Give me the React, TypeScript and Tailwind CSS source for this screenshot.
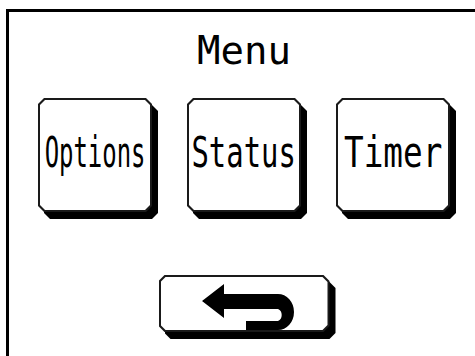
import React from "react";

const outerClip =
  "[clip-path:polygon(6px_0,calc(100%_-_6px)_0,100%_6px,100%_calc(100%_-_6px),calc(100%_-_6px)_100%,6px_100%,0_calc(100%_-_6px),0_6px)]";
const innerClip =
  "[clip-path:polygon(5px_0,calc(100%_-_5px)_0,100%_5px,100%_calc(100%_-_5px),calc(100%_-_5px)_100%,5px_100%,0_calc(100%_-_5px),0_5px)]";

const BevelButton = ({
  className,
  children,
}: {
  className: string;
  children: React.ReactNode;
}) => (
  <div className={`relative ${className}`}>
    {/* drop shadow */}
    <div
      className={`absolute inset-0 translate-x-[6px] translate-y-[7px] bg-black ${outerClip}`}
    ></div>
    {/* border */}
    <div className={`absolute inset-0 bg-[#1a1a1a] ${outerClip}`}></div>
    <div
      className={`absolute inset-[2px] bg-white flex items-center justify-center ${innerClip}`}
    >
      {children}
    </div>
  </div>
);

const Label = ({ text, scale }: { text: string; scale: string }) => (
  <span
    className={`block pb-[5px] text-[38px] leading-none text-black whitespace-nowrap scale-y-[1.1] ${scale}`}
    style={{ fontFamily: '"DejaVu Sans Mono", "Liberation Mono", monospace' }}
  >
    {text}
  </span>
);

const BackArrow = () => (
  <svg width="95" height="50" viewBox="0 0 95 50" className="mt-[8px] ml-[8px]">
    <path
      d="M1 18 L23 1 L23 11 L77 11 A16 18 0 0 1 77 47 L45 47 L45 38 L77 38 A6 6.5 0 0 0 77 26 L23 26 L23 35 Z"
      fill="black"
    />
  </svg>
);

export default function App() {
  return (
    <div className="w-[475px] h-[356px] overflow-hidden bg-white pl-[6px] pt-[9px]">
      <div className="w-[473px] h-[400px] border-l-[3px] border-t-[3px] border-black flex flex-col items-center">
        <div
          className="mt-[19px] text-[39px] leading-none text-black"
          style={{ fontFamily: '"DejaVu Sans Mono", "Liberation Mono", monospace' }}
        >
          Menu
        </div>

        <div className="mt-[28px] flex gap-[35px]">
          <BevelButton className="w-[114px] h-[114px]">
            <Label text="Options" scale="scale-x-[0.63]" />
          </BevelButton>
          <BevelButton className="w-[114px] h-[114px]">
            <Label text="Status" scale="scale-x-[0.76]" />
          </BevelButton>
          <BevelButton className="w-[114px] h-[114px]">
            <Label text="Timer" scale="scale-x-[0.86]" />
          </BevelButton>
        </div>

        <BevelButton className="mt-[63px] w-[171px] h-[57px]">
          <BackArrow />
        </BevelButton>
      </div>
    </div>
  );
}
